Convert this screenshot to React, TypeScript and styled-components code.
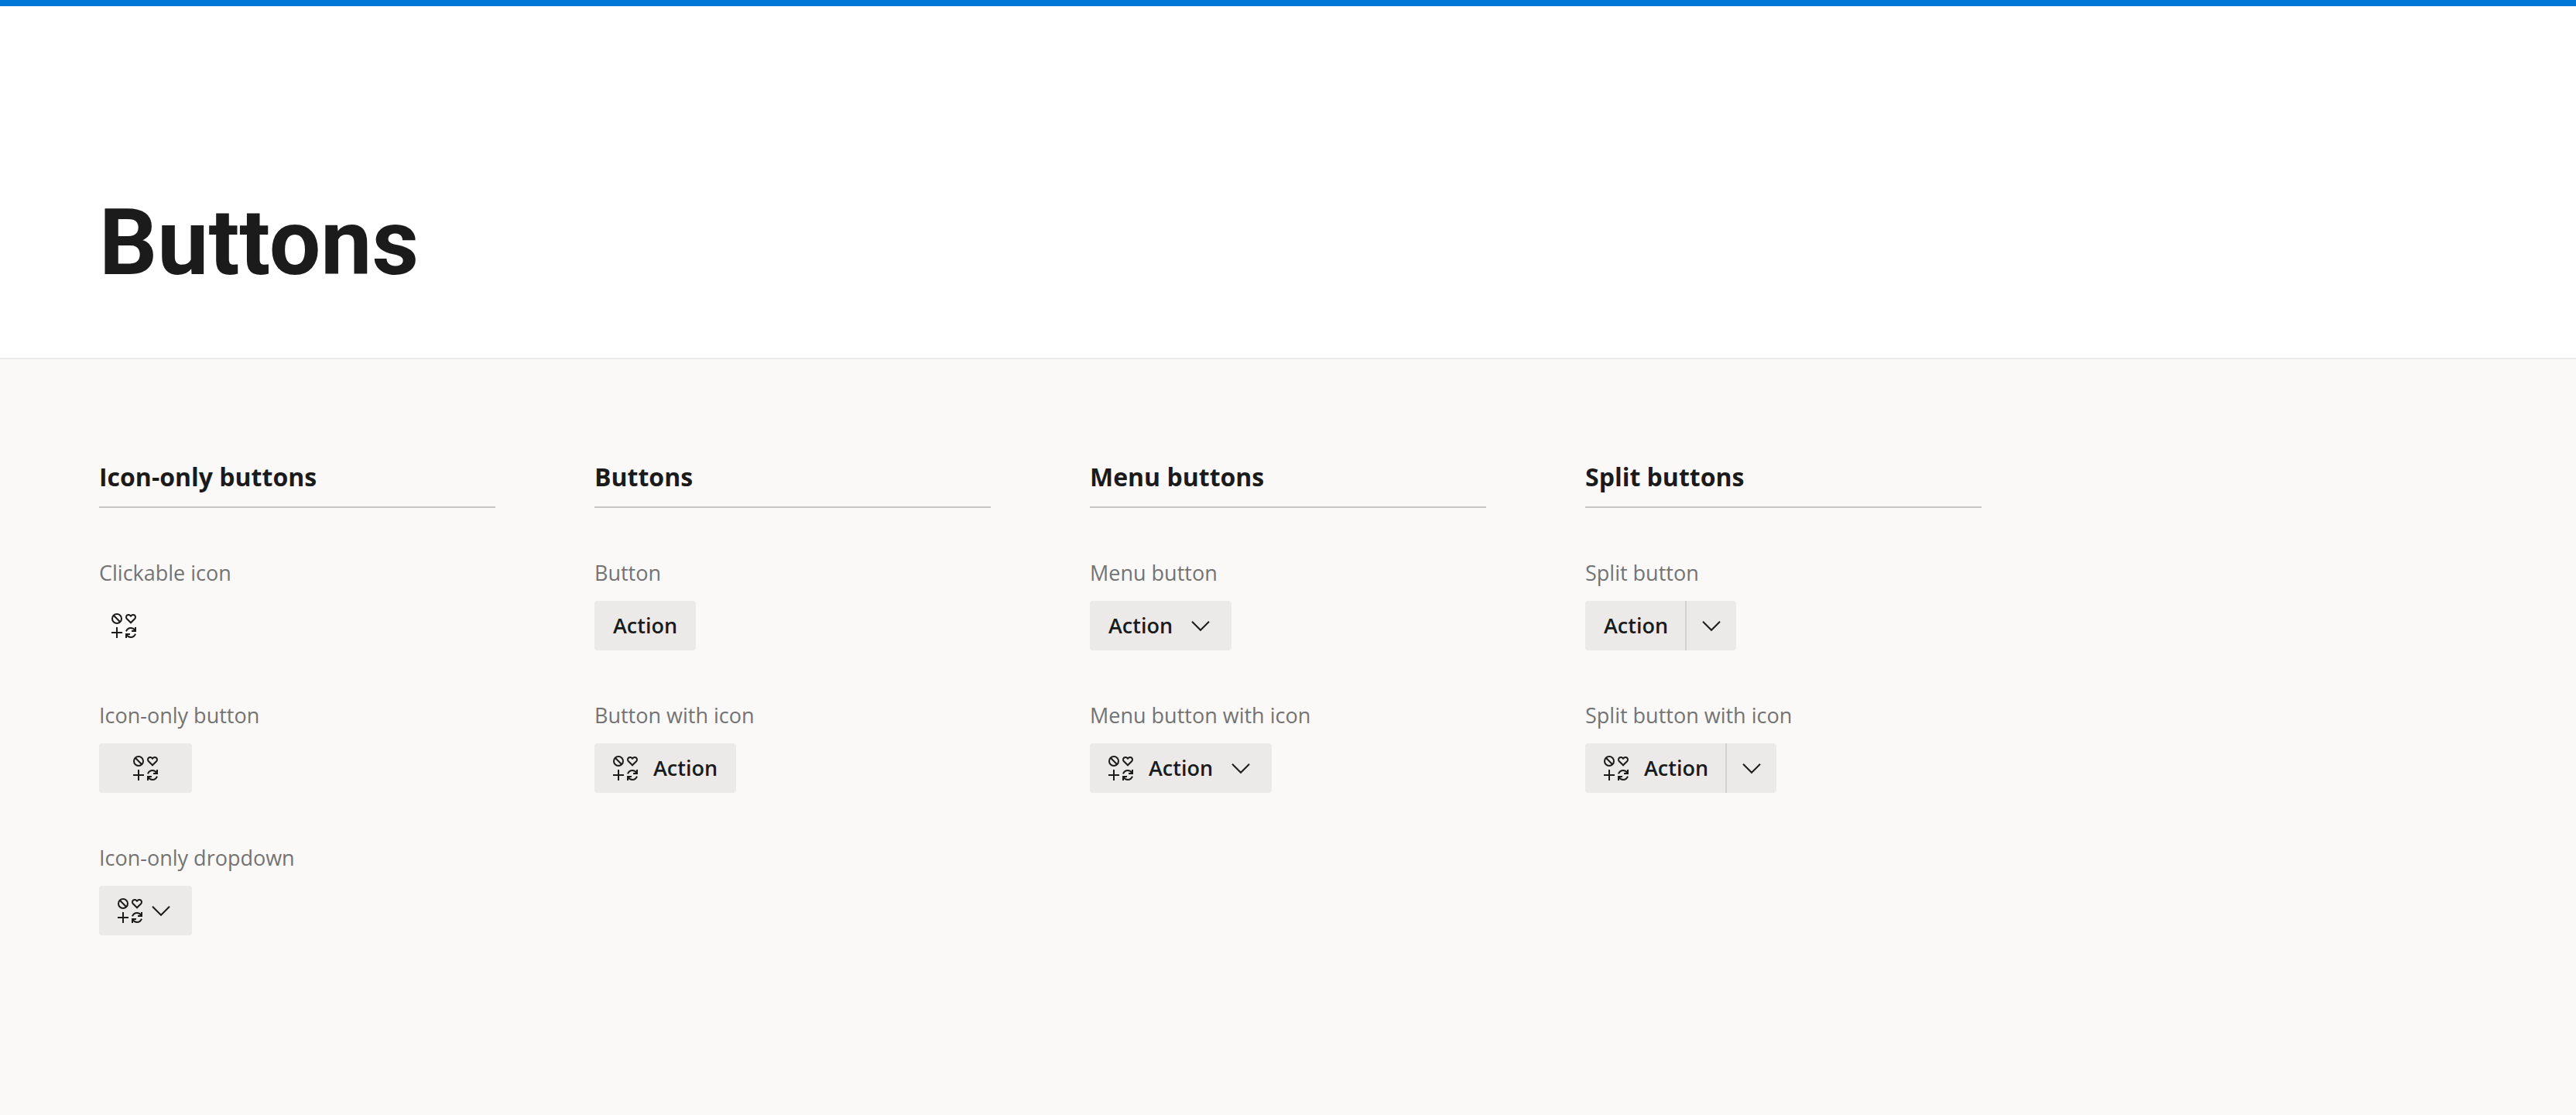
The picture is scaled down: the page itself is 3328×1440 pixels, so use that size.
import React from "react";
import styled, { createGlobalStyle, css } from "styled-components";

const ink = "#1b1b1b";
const surface = "#ebeae8";

const GlobalStyle = createGlobalStyle`
  *, *::before, *::after { box-sizing: border-box; }
  body {
    margin: 0;
    background: #faf9f8;
    color: ${ink};
    font-family: "Open Sans", "Noto Sans", sans-serif;
  }
`;

const Header = styled.header`
  border-top: 8px solid #0078d7;
  border-bottom: 2px solid #eaeaea;
  background: #ffffff;
  padding: 226px 128px 68px;
`;

const Title = styled.h1`
  margin: 0;
  font-family: Roboto, "Open Sans", sans-serif;
  font-size: 118px;
  line-height: 160px;
  font-weight: 700;
`;

const Columns = styled.main`
  display: grid;
  grid-template-columns: repeat(auto-fill, 512px);
  gap: 128px;
  padding: 128px;
`;

const Column = styled.section`
  display: flex;
  flex-direction: column;
  gap: 64px;
`;

const Heading = styled.h2`
  margin: 0;
  padding-bottom: 14px;
  border-bottom: 2px solid #c8c6c4;
  font-size: 32px;
  line-height: 48px;
  font-weight: 700;
`;

const Example = styled.div`
  display: flex;
  flex-direction: column;
  align-items: flex-start;
  gap: 16px;
`;

const Caption = styled.span`
  color: #737373;
  font-size: 27px;
  line-height: 40px;
`;

const Button = styled.button<{ $kind?: "ghost" | "wide" | "compact" | "menu" }>`
  display: inline-flex;
  align-items: center;
  justify-content: center;
  gap: 20px;
  height: 64px;
  padding: 0 24px;
  border: 0;
  border-radius: 4px;
  background: ${surface};
  color: inherit;
  font: inherit;
  font-size: 27px;
  line-height: 40px;
  font-weight: 600;
  cursor: pointer;

  ${(p) => p.$kind === "ghost" && css`
    padding: 0 16px;
    background: transparent;
  `}
  ${(p) => p.$kind === "wide" && css`
    padding: 0 44px;
  `}
  ${(p) => p.$kind === "compact" && css`
    gap: 12px;
    padding-right: 28px;
  `}
  ${(p) => p.$kind === "menu" && css`
    padding-right: 28px;
  `}
`;

const MenuArrow = styled.span`
  display: flex;
  margin-left: 4px;
`;

const Split = styled.div`
  display: flex;
`;

const SplitMain = styled(Button)`
  border-right: 2px solid #d2d1cf;
  border-radius: 4px 0 0 4px;
  padding-right: 22px;
`;

const SplitToggle = styled(Button)`
  padding: 0 20px;
  border-radius: 0 4px 4px 0;
`;

const Glyph = styled.svg`
  display: block;
  flex: none;
  fill: none;
  stroke: currentColor;
  stroke-width: 2;
`;

function PlaceholderIcon() {
  return (
    <Glyph width="32" height="32" viewBox="0 0 32 32" aria-hidden="true">
      <circle cx="7" cy="7" r="6" />
      <path d="M2.8 2.8 11.2 11.2" />
      <path d="M25 12.3 20 7.3C18.6 5.8 18.8 3.6 20.1 2.6 21.5 1.5 23.6 1.8 25 3.6 26.4 1.8 28.5 1.5 29.9 2.6 31.2 3.6 31.4 5.8 30 7.3Z" />
      <path d="M7 18V32M0 25H14" />
      <path d="M19 23.4C20 20.8 22.3 19 25 19 27.3 19 29.3 20.3 30.6 22.6M31 18V23H26" />
      <path d="M31 26.6C30 29.2 27.7 31 25 31 22.7 31 20.7 29.7 19.4 27.4M19 32V27H24" />
    </Glyph>
  );
}

function Chevron() {
  return (
    <Glyph width="24" height="24" viewBox="0 0 24 24" aria-hidden="true">
      <path d="M1 6.8 12 17.8 23 6.8" />
    </Glyph>
  );
}

function Sample({ caption, children }: { caption: string; children: React.ReactNode }) {
  return (
    <Example>
      <Caption>{caption}</Caption>
      {children}
    </Example>
  );
}

function MenuButton({ icon }: { icon?: boolean }) {
  return (
    <Button type="button" $kind="menu" aria-haspopup="menu">
      {icon && <PlaceholderIcon />}
      Action
      <MenuArrow>
        <Chevron />
      </MenuArrow>
    </Button>
  );
}

function SplitButton({ icon }: { icon?: boolean }) {
  return (
    <Split>
      <SplitMain type="button">
        {icon && <PlaceholderIcon />}
        Action
      </SplitMain>
      <SplitToggle type="button" aria-haspopup="menu" aria-label="More actions">
        <Chevron />
      </SplitToggle>
    </Split>
  );
}

export default function App() {
  return (
    <>
      <GlobalStyle />
      <Header>
        <Title>Buttons</Title>
      </Header>
      <Columns>
        <Column>
          <Heading>Icon-only buttons</Heading>
          <Sample caption="Clickable icon">
            <Button type="button" $kind="ghost" aria-label="Clickable icon">
              <PlaceholderIcon />
            </Button>
          </Sample>
          <Sample caption="Icon-only button">
            <Button type="button" $kind="wide" aria-label="Icon-only button">
              <PlaceholderIcon />
            </Button>
          </Sample>
          <Sample caption="Icon-only dropdown">
            <Button type="button" $kind="compact" aria-haspopup="menu" aria-label="Icon-only dropdown">
              <PlaceholderIcon />
              <Chevron />
            </Button>
          </Sample>
        </Column>
        <Column>
          <Heading>Buttons</Heading>
          <Sample caption="Button">
            <Button type="button">Action</Button>
          </Sample>
          <Sample caption="Button with icon">
            <Button type="button">
              <PlaceholderIcon />
              Action
            </Button>
          </Sample>
        </Column>
        <Column>
          <Heading>Menu buttons</Heading>
          <Sample caption="Menu button">
            <MenuButton />
          </Sample>
          <Sample caption="Menu button with icon">
            <MenuButton icon />
          </Sample>
        </Column>
        <Column>
          <Heading>Split buttons</Heading>
          <Sample caption="Split button">
            <SplitButton />
          </Sample>
          <Sample caption="Split button with icon">
            <SplitButton icon />
          </Sample>
        </Column>
      </Columns>
    </>
  );
}
